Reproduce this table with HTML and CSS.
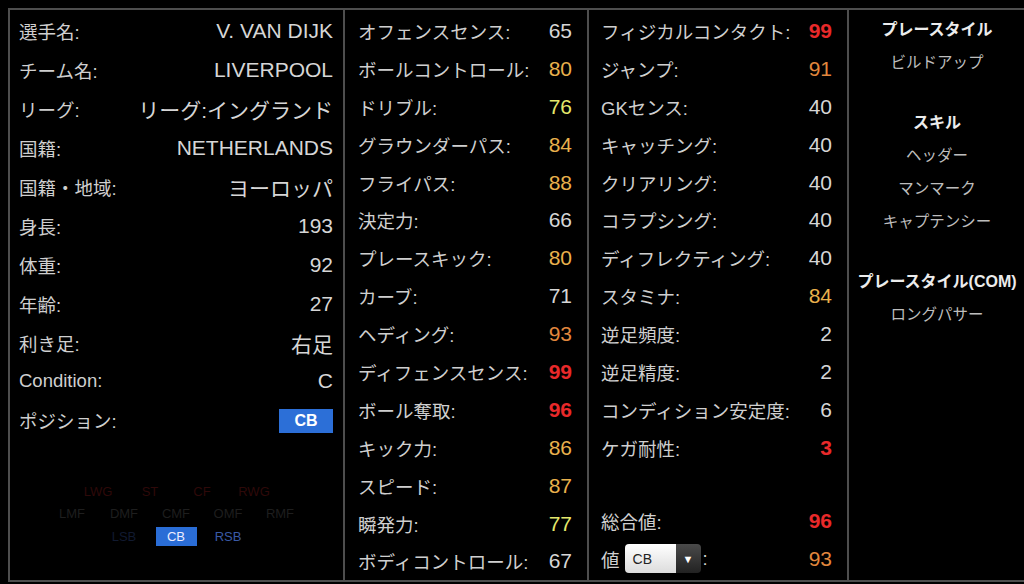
FILE: index.html
```html
<!DOCTYPE html>
<html lang="ja">
<head>
<meta charset="utf-8">
<title>V. VAN DIJK</title>
<link rel="stylesheet" href="styles.css">
</head>
<body>
<div class="sheet">
  <section class="col col-info">
    <div class="row"><span class="lbl">選手名:</span><span class="val">V. VAN DIJK</span></div>
    <div class="row"><span class="lbl">チーム名:</span><span class="val">LIVERPOOL</span></div>
    <div class="row"><span class="lbl">リーグ:</span><span class="val">リーグ:イングランド</span></div>
    <div class="row"><span class="lbl">国籍:</span><span class="val">NETHERLANDS</span></div>
    <div class="row"><span class="lbl">国籍・地域:</span><span class="val">ヨーロッパ</span></div>
    <div class="row"><span class="lbl">身長:</span><span class="val">193</span></div>
    <div class="row"><span class="lbl">体重:</span><span class="val">92</span></div>
    <div class="row"><span class="lbl">年齢:</span><span class="val">27</span></div>
    <div class="row"><span class="lbl">利き足:</span><span class="val">右足</span></div>
    <div class="row"><span class="lbl">Condition:</span><span class="val">C</span></div>
    <div class="row"><span class="lbl">ポジション:</span><span class="badge">CB</span></div>
    <div class="posgrid">
      <div class="prow">
        <span class="pos fw">LWG</span><span class="pos fw">ST</span><span class="pos fw">CF</span><span class="pos fw">RWG</span>
      </div>
      <div class="prow">
        <span class="pos mf">LMF</span><span class="pos mf">DMF</span><span class="pos mf">CMF</span><span class="pos mf">OMF</span><span class="pos mf">RMF</span>
      </div>
      <div class="prow">
        <span class="pos df-dim">LSB</span><span class="pos sel"><span class="selbox">CB</span></span><span class="pos df">RSB</span>
      </div>
    </div>
  </section>

  <section class="col col-stats">
    <div class="srow"><span class="lbl">オフェンスセンス:</span><span class="num">65</span></div>
    <div class="srow"><span class="lbl">ボールコントロール:</span><span class="num c-or">80</span></div>
    <div class="srow"><span class="lbl">ドリブル:</span><span class="num c-yl">76</span></div>
    <div class="srow"><span class="lbl">グラウンダーパス:</span><span class="num c-or">84</span></div>
    <div class="srow"><span class="lbl">フライパス:</span><span class="num c-or">88</span></div>
    <div class="srow"><span class="lbl">決定力:</span><span class="num">66</span></div>
    <div class="srow"><span class="lbl">プレースキック:</span><span class="num c-or">80</span></div>
    <div class="srow"><span class="lbl">カーブ:</span><span class="num">71</span></div>
    <div class="srow"><span class="lbl">ヘディング:</span><span class="num c-dk">93</span></div>
    <div class="srow"><span class="lbl">ディフェンスセンス:</span><span class="num c-rd">99</span></div>
    <div class="srow"><span class="lbl">ボール奪取:</span><span class="num c-rd">96</span></div>
    <div class="srow"><span class="lbl">キック力:</span><span class="num c-or">86</span></div>
    <div class="srow"><span class="lbl">スピード:</span><span class="num c-or">87</span></div>
    <div class="srow"><span class="lbl">瞬発力:</span><span class="num c-yl">77</span></div>
    <div class="srow"><span class="lbl">ボディコントロール:</span><span class="num">67</span></div>
  </section>

  <section class="col col-stats2">
    <div class="srow"><span class="lbl">フィジカルコンタクト:</span><span class="num c-rd">99</span></div>
    <div class="srow"><span class="lbl">ジャンプ:</span><span class="num c-dk">91</span></div>
    <div class="srow"><span class="lbl">GKセンス:</span><span class="num">40</span></div>
    <div class="srow"><span class="lbl">キャッチング:</span><span class="num">40</span></div>
    <div class="srow"><span class="lbl">クリアリング:</span><span class="num">40</span></div>
    <div class="srow"><span class="lbl">コラプシング:</span><span class="num">40</span></div>
    <div class="srow"><span class="lbl">ディフレクティング:</span><span class="num">40</span></div>
    <div class="srow"><span class="lbl">スタミナ:</span><span class="num c-or">84</span></div>
    <div class="srow"><span class="lbl">逆足頻度:</span><span class="num">2</span></div>
    <div class="srow"><span class="lbl">逆足精度:</span><span class="num">2</span></div>
    <div class="srow"><span class="lbl">コンディション安定度:</span><span class="num">6</span></div>
    <div class="srow"><span class="lbl">ケガ耐性:</span><span class="num c-rd">3</span></div>
    <div class="spacer"></div>
    <div class="srow"><span class="lbl">総合値:</span><span class="num c-rd">96</span></div>
    <div class="srow">
      <span class="lbl lbl-sel">値<span class="select"><span class="sel-text">CB</span><span class="sel-btn">▼</span></span>:</span>
      <span class="num c-dk">93</span>
    </div>
  </section>

  <section class="col col-skills">
    <div class="head">プレースタイル</div>
    <div class="item">ビルドアップ</div>
    <div class="head gap">スキル</div>
    <div class="item">ヘッダー</div>
    <div class="item">マンマーク</div>
    <div class="item">キャプテンシー</div>
    <div class="head gap">プレースタイル(COM)</div>
    <div class="item">ロングパサー</div>
  </section>
</div>
</body>
</html>
```

FILE: styles.css
```css
html, body {
  margin: 0;
  padding: 0;
  background: #000;
  overflow: hidden;
}

body {
  width: 1024px;
  height: 584px;
  font-family: "Liberation Sans", "Noto Sans CJK JP", sans-serif;
  color: #d2d2d2;
}

.sheet {
  margin: 8px 0 0 8px;
  width: 1019px;
  height: 574px;
  box-sizing: border-box;
  border: 2px solid #4e4e4e;
  display: grid;
  grid-template-columns: 333px 244px 260px 1fr;
}

.col {
  box-sizing: border-box;
  height: 100%;
}

.col + .col {
  border-left: 2px solid #4e4e4e;
}

/* info column */
.col-info {
  padding: 2px 10px 0 9px;
}

.row {
  height: 38.9px;
  display: flex;
  align-items: center;
  justify-content: space-between;
}

.lbl {
  font-size: 18.5px;
  color: #cfcfcf;
  white-space: nowrap;
}

.val {
  font-size: 21px;
  color: #d6d6d6;
  white-space: nowrap;
}

.badge {
  width: 54px;
  height: 24px;
  background: #2c6fd7;
  color: #fff;
  font-weight: bold;
  font-size: 16px;
  display: flex;
  align-items: center;
  justify-content: center;
  margin-top: 2px;
}

.posgrid {
  margin-top: 40px;
  font-size: 13px;
}

.prow {
  height: 22.5px;
  display: flex;
  justify-content: center;
  align-items: center;
}

.pos {
  width: 52px;
  text-align: center;
  display: flex;
  justify-content: center;
}

.fw { color: #2e0909; }
.mf { color: #1e1e1e; }
.df-dim { color: #111a30; }
.df { color: #3a5aa6; }

.selbox {
  background: #2a6dd6;
  color: #eef;
  width: 41px;
  height: 19px;
  display: flex;
  align-items: center;
  justify-content: center;
}

/* stats columns */
.col-stats {
  padding: 2px 15px 0 13px;
}

.col-stats2 {
  padding: 2px 15px 0 12px;
}

.srow {
  height: 37.9px;
  display: flex;
  align-items: center;
  justify-content: space-between;
}

.num {
  font-size: 21px;
  color: #d6d6d6;
}

.c-or { color: #e9b14c; }
.c-yl { color: #e5e86c; }
.c-dk { color: #e2873d; }
.c-rd { color: #e8292a; font-weight: bold; }

.spacer {
  height: 35px;
}

.lbl-sel {
  display: flex;
  align-items: center;
  gap: 5px;
}

.select {
  display: inline-flex;
  height: 29px;
  border-radius: 4px;
  overflow: hidden;
  margin-right: -3px;
}

.sel-text {
  width: 43px;
  padding-left: 8px;
  background: linear-gradient(#ffffff, #dcdcdc);
  color: #222;
  font-size: 14px;
  display: flex;
  align-items: center;
}

.sel-btn {
  width: 25px;
  background: linear-gradient(#4a4a4a, #222);
  color: #fff;
  font-size: 11px;
  display: flex;
  align-items: center;
  justify-content: center;
}

/* skills column */
.col-skills {
  padding-top: 3px;
  text-align: center;
}

.head {
  font-size: 16px;
  font-weight: bold;
  color: #ececec;
  line-height: 33px;
  height: 33px;
}

.item {
  font-size: 15.5px;
  color: #bdbdbd;
  line-height: 33px;
  height: 33px;
}

.head.gap {
  margin-top: 27px;
}
```
